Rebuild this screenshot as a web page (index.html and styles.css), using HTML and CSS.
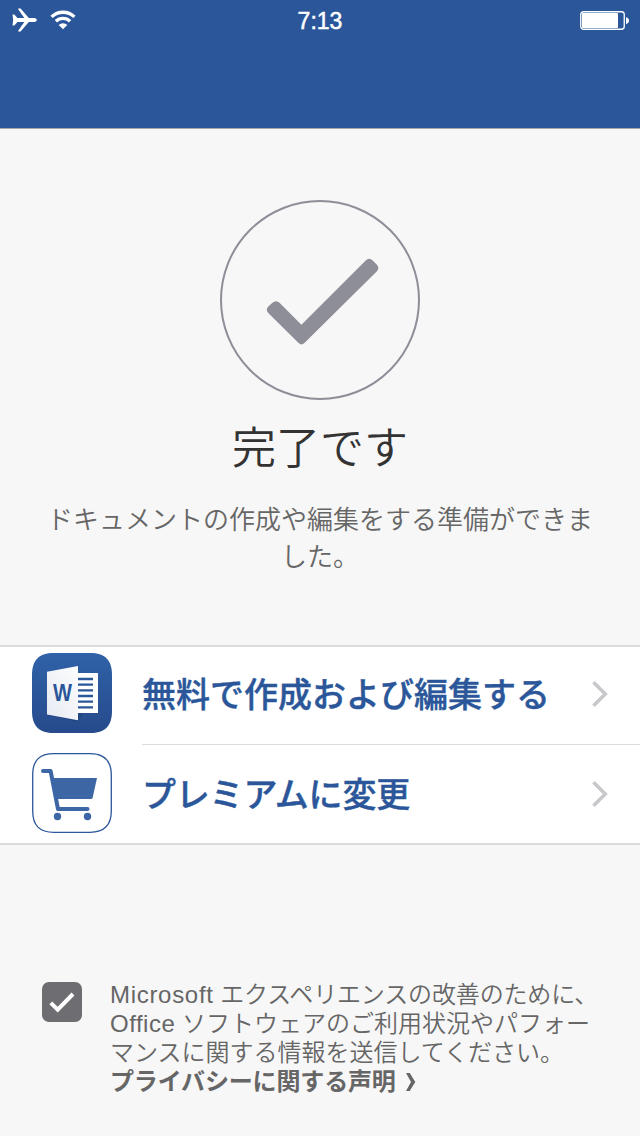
FILE: index.html
```
<!DOCTYPE html>
<html lang="ja">

<head>
  <meta charset="UTF-8">
  <meta name="viewport" content="width=device-width, initial-scale=1.0">
  <title>完了です</title>
  <link rel="stylesheet" href="styles.css">
</head>

<body>
  <div class="wrapper">
    <header class="header">
      <div class="status-bar">
        <div class="status-left">
          <svg class="plane" width="25" height="24" viewBox="0 0 25 24">
            <path d="M0.5 6.5h1.8l3.2 3.5h6.8L6.2 1.2V0.6h2.4l8.2 9.4h5.4c1.6 0 2.6 1.1 2.6 2s-1 2-2.6 2h-5.4l-8.2 9.4H6.2v-0.6l6.1-8.8H5.5L2.3 17.5H0.5l0.7-5.5z" fill="#fff" />
          </svg>
          <svg class="wifi" width="26" height="20" viewBox="0 0 26 20">
            <path d="M1.6 6.9a16.2 16.2 0 0 1 22.8 0M5.9 11.3a10 10 0 0 1 14.2 0" fill="none" stroke="#fff" stroke-width="3.4" />
            <path d="M13 19.3l-4.3-4.3a6 6 0 0 1 8.6 0z" fill="#fff" />
          </svg>
        </div>
        <div class="time">7:13</div>
        <div class="status-right">
          <svg width="50" height="20" viewBox="0 0 50 20">
            <rect x="0.75" y="0.75" width="43.5" height="17.5" rx="2.8" fill="none" stroke="#fff" stroke-width="1.3" />
            <rect x="2" y="2" width="36" height="15" rx="0.8" fill="#fff" />
            <path d="M46 6.2c2 0.4 3 1.6 3 3.4s-1 3-3 3.4z" fill="#fff" />
          </svg>
        </div>
      </div>
    </header>

    <main class="content">
      <svg class="done-icon" width="200" height="200" viewBox="0 0 200 200">
        <circle cx="100" cy="100" r="99" fill="none" stroke="#8e8e99" stroke-width="2" />
        <path d="M52.5 102.8q3.5-3.3 7 0L81.4 124.7L145.7 60.4q3.5-3.3 7 0l4 4q3.4 3.5 0 7L84.4 143q-2.9 2.9-5.8 0L48.5 113.3q-3.4-3.5 0-7z" fill="#8e8e99" />
      </svg>
      <h1 class="title">完了です</h1>
      <p class="desc">ドキュメントの作成や編集をする準備ができま<br>した。</p>
    </main>

    <ul class="list">
      <li class="item">
        <svg class="item-icon" width="80" height="80" viewBox="0 0 80 80">
          <defs>
            <linearGradient id="wordBg" x1="0" y1="0" x2="0" y2="1">
              <stop offset="0" stop-color="#2f62a8" />
              <stop offset="1" stop-color="#264a8b" />
            </linearGradient>
            <linearGradient id="wordCover" x1="0" y1="1" x2="1" y2="0">
              <stop offset="0" stop-color="#e6eaf2" />
              <stop offset="1" stop-color="#fdfdfe" />
            </linearGradient>
          </defs>
          <path d="M22 0H58C73 0 80 7 80 22V58C80 73 73 80 58 80H22C7 80 0 73 0 58V22C0 7 7 0 22 0z" fill="url(#wordBg)" />
          <path d="M15 62l31 7 5-7.5V60z" fill="#203f78" opacity="0.5" />
          <rect x="44" y="20" width="22" height="40" fill="#fff" />
          <path d="M46 26h15M46 31.7h15M46 37.3h15M46 43h15M46 48.7h15M46 54.3h15" stroke="#2b579a" stroke-width="2.3" />
          <path d="M15 18.7L46 13v54.3L15 61.5z" fill="url(#wordCover)" />
          <text class="word-letter" x="30.5" y="48" text-anchor="middle" textLength="19" lengthAdjust="spacingAndGlyphs">W</text>
        </svg>
        <div class="item-body">
          <span class="item-text">無料で作成および編集する</span>
          <svg class="arrow" width="16" height="28" viewBox="0 0 16 28">
            <path d="M1.5 2.2L13.3 14L1.5 25.8" fill="none" stroke="#c7c7cc" stroke-width="3.6" />
          </svg>
        </div>
      </li>
      <li class="item">
        <svg class="item-icon" width="80" height="80" viewBox="0 0 80 80">
          <path d="M22 0.7H58C72.5 0.7 79.3 7.5 79.3 22V58C79.3 72.5 72.5 79.3 58 79.3H22C7.5 79.3 0.7 72.5 0.7 58V22C0.7 7.5 7.5 0.7 22 0.7z" fill="#fff" stroke="#2b579a" stroke-width="1.3" />
          <path d="M11 18h7.6L26 56h29.5" fill="none" stroke="#3c66a4" stroke-width="4" stroke-linecap="round" stroke-linejoin="round" />
          <path d="M20.5 25H65L60.7 44.5q-0.4 1.5-2 1.5H24.5z" fill="#3c66a4" />
          <circle cx="25.5" cy="63.5" r="3.7" fill="#3c66a4" />
          <circle cx="55.5" cy="63.5" r="3.7" fill="#3c66a4" />
        </svg>
        <div class="item-body">
          <span class="item-text premium">プレミアムに変更</span>
          <svg class="arrow" width="16" height="28" viewBox="0 0 16 28">
            <path d="M1.5 2.2L13.3 14L1.5 25.8" fill="none" stroke="#c7c7cc" stroke-width="3.6" />
          </svg>
        </div>
      </li>
    </ul>

    <footer class="footer">
      <div class="checkbox">
        <svg width="40" height="40" viewBox="0 0 40 40">
          <path d="M8.8 20.8L15.7 27.7L31 12" fill="none" stroke="#fff" stroke-width="4" />
        </svg>
      </div>
      <div class="notice">
        <p><span class="latin">Microsoft</span><span class="tight"> エクスペリエンスの改善のために、</span><br><span class="latin office">Office</span> ソフトウェアのご利用状況やパフォー<br>マンスに関する情報を送信してください。</p>
        <p class="privacy">プライバシーに関する声明
          <svg width="10" height="18" viewBox="0 0 10 18">
            <path d="M0 0h3.7L9.3 9L3.7 18H0L5 9z" fill="#666" />
          </svg>
        </p>
      </div>
    </footer>
  </div>
</body>

</html>
```
FILE: styles.css
```
* {
  margin: 0;
  padding: 0;
  box-sizing: border-box;
}

body {
  background-color: #f7f7f7;
  font-family: "Liberation Sans", "Noto Sans CJK JP", sans-serif;
}

svg {
  display: block;
  flex: none;
}

.wrapper {
  width: 640px;
  height: 1136px;
  overflow: hidden;
}

.header {
  height: 129px;
  background-color: #2b579a;
  border-bottom: 1px solid #a7a7aa;
}

.status-bar {
  display: grid;
  grid-template-columns: 1fr auto 1fr;
  align-items: center;
  height: 40px;
  padding: 0 10px 0 12px;
  color: #fff;
}

.status-left {
  display: flex;
  align-items: center;
  gap: 13px;
}

.time {
  padding: 2px 2px 0 0;
  font-size: 23px;
  line-height: 38px;
  -webkit-text-stroke: 0.5px #fff;
}

.status-right {
  display: flex;
  justify-content: flex-end;
  padding-top: 2px;
}

.content {
  display: flex;
  flex-direction: column;
  align-items: center;
  height: 516px;
  padding-top: 71px;
}

.title {
  margin-top: 17px;
  font-size: 44px;
  font-weight: 350;
  line-height: 64px;
  color: #333;
}

.desc {
  margin-top: 21px;
  font-size: 26px;
  font-weight: 350;
  line-height: 37px;
  text-align: center;
  color: #666;
}

.list {
  list-style: none;
  background-color: #fff;
  border-top: 2px solid #dcdcdd;
  border-bottom: 2px solid #dcdcdd;
}

.item {
  display: flex;
  height: 98px;
  padding: 6px 0 0 32px;
}

.item + .item {
  padding-top: 8px;
}

.item-body {
  flex: 1;
  display: flex;
  justify-content: space-between;
  align-items: center;
  height: 92px;
  margin-left: 30px;
  padding: 0 32px 9px 0;
  border-bottom: 1px solid #dcdcdd;
}

.item + .item .item-body {
  height: 90px;
  padding-bottom: 8px;
  border-bottom: none;
}

.item-text {
  padding-top: 1px;
  font-size: 34px;
  font-weight: 500;
  line-height: 50px;
  color: #2b579a;
  -webkit-text-stroke: 0.4px #2b579a;
}

.premium {
  letter-spacing: -0.2px;
}

.word-letter {
  font-size: 24px;
  font-weight: bold;
  fill: #2b579a;
}

.footer {
  display: flex;
  padding: 137px 0 0 42px;
}

.checkbox {
  flex: none;
  width: 40px;
  height: 40px;
  border-radius: 7px;
  background-color: #6d6d72;
}

.notice {
  margin: -2px 0 0 28px;
  font-size: 24px;
  font-weight: 350;
  line-height: 29px;
  white-space: nowrap;
  color: #666;
}

.latin {
  letter-spacing: 0.7px;
}

.tight {
  letter-spacing: -0.15px;
}

.office {
  letter-spacing: 0.5px;
}

.privacy {
  display: flex;
  align-items: center;
  gap: 10px;
  font-weight: 700;
  letter-spacing: -0.15px;
}
```
